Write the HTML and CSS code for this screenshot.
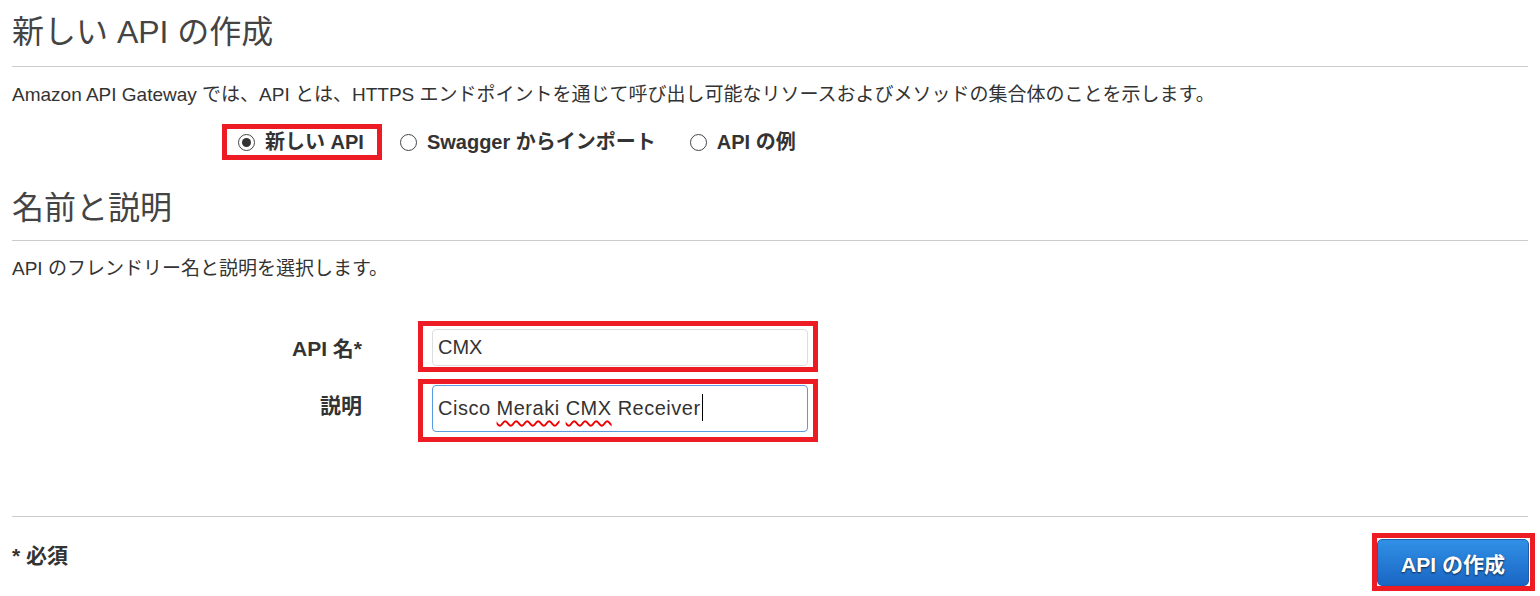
FILE: index.html
```html
<!DOCTYPE html>
<html lang="ja">
<head>
<meta charset="utf-8">
<link rel="stylesheet" href="styles.css">
</head>
<body>
<div class="page">
  <h1 class="title">新しい API の作成</h1>
  <p class="desc">Amazon API Gateway では、API とは、HTTPS エンドポイントを通じて呼び出し可能なリソースおよびメソッドの集合体のことを示します。</p>
  <div class="radios">
    <div class="hl hl-radio">
      <label class="opt"><span class="radio checked"></span><span>新しい API</span></label>
    </div>
    <label class="opt opt2"><span class="radio"></span><span>Swagger からインポート</span></label>
    <label class="opt opt3"><span class="radio"></span><span>API の例</span></label>
  </div>

  <h2 class="title title2">名前と説明</h2>
  <p class="desc">API のフレンドリー名と説明を選択します。</p>

  <div class="form">
    <div class="row">
      <div class="lbl">API 名*</div>
      <div class="hl hl-input">
        <div class="input">CMX</div>
      </div>
    </div>
    <div class="row row2">
      <div class="lbl">説明</div>
      <div class="hl hl-area">
        <div class="area">Cisco <span class="sp">Meraki</span> <span class="sp">CMX</span> Receiver<span class="caret"></span></div>
      </div>
    </div>
  </div>

  <div class="footer">
    <div class="req">* 必須</div>
    <div class="hl hl-btn">
      <button class="btn">API の作成</button>
    </div>
  </div>
</div>
</body>
</html>
```

FILE: styles.css
```css
* { box-sizing: border-box; }
html, body { margin: 0; padding: 0; background: #fff; }
body {
  font-family: "Liberation Sans", "Noto Sans CJK JP", sans-serif;
  color: #333;
}
.page { padding: 0 12px; width: 1540px; }

.title {
  font-size: 32px;
  font-weight: normal;
  line-height: 34px;
  color: #444;
  margin: 15px 0 0;
  padding-bottom: 17px;
  border-bottom: 1px solid #ccc;
}
.title2 { margin-top: 31px; padding-bottom: 15px; }

.desc {
  font-size: 19px;
  line-height: 24px;
  margin: 16px 0 0;
  color: #333;
}

.hl { border: 5px solid #ed1c24; }

.radios {
  display: flex;
  align-items: center;
  margin-top: 17px;
  padding-left: 210px;
  height: 36px;
}
.hl-radio { padding: 0 13px 0 11px; height: 36px; display: flex; align-items: center; }
.opt {
  display: flex;
  align-items: center;
  gap: 10px;
  font-size: 20px;
  font-weight: bold;
  line-height: 26px;
  color: #333;
}
.opt2 { margin-left: 18px; }
.opt3 { margin-left: 34px; }
.radio {
  width: 17px;
  height: 17px;
  border: 1px solid #444;
  border-radius: 50%;
  display: flex;
  align-items: center;
  justify-content: center;
  background: #fff;
}
.radio.checked::after {
  content: "";
  width: 9px;
  height: 9px;
  border-radius: 50%;
  background: #333;
}

.form { margin-top: 40px; }
.row { display: flex; align-items: flex-start; }
.row2 { margin-top: 7px; }
.lbl {
  width: 350px;
  text-align: right;
  font-size: 21px;
  font-weight: bold;
  line-height: 24px;
  padding-top: 16px;
  margin-right: 56px;
  color: #333;
}
.row2 .lbl { padding-top: 15px; }
.hl-input { width: 400px; padding: 3px 5px 1px 9px; }
.input {
  height: 37px;
  border: 1px solid #ddd;
  border-radius: 4px;
  font-size: 20px;
  line-height: 35px;
  padding-left: 5px;
  color: #333;
}
.hl-area { width: 400px; padding: 1px 5px 5px 9px; }
.area {
  height: 47px;
  border: 1px solid #5a9be0;
  border-radius: 4px;
  font-size: 20px;
  letter-spacing: 0.5px;
  line-height: 24px;
  padding: 8px 5px;
  color: #333;
}
.sp {
  text-decoration: underline wavy #e00;
  text-decoration-thickness: 1.6px;
  text-underline-offset: 5px;
  text-decoration-skip-ink: none;
}
.caret {
  display: inline-block;
  width: 1px;
  height: 27px;
  background: #000;
  vertical-align: -6px;
  margin-left: 1px;
}

.footer {
  display: flex;
  justify-content: space-between;
  align-items: flex-start;
  margin-top: 74px;
  border-top: 1px solid #ccc;
}
.req {
  font-size: 21px;
  font-weight: bold;
  line-height: 24px;
  margin-top: 27px;
  color: #333;
}
.hl-btn {
  margin-top: 16px;
  margin-right: -7px;
  padding: 1px 1px 0 0;
}
.btn {
  display: block;
  width: 152px;
  height: 47px;
  border: 1px solid #1d5fae;
  border-radius: 5px;
  background: linear-gradient(#3190e6, #1a66c4);
  color: #fff;
  font-family: "Liberation Sans", "Noto Sans CJK JP", sans-serif;
  font-size: 21px;
  font-weight: bold;
  text-shadow: 0 1px 2px rgba(0, 0, 0, 0.7);
  padding: 0;
}
```
